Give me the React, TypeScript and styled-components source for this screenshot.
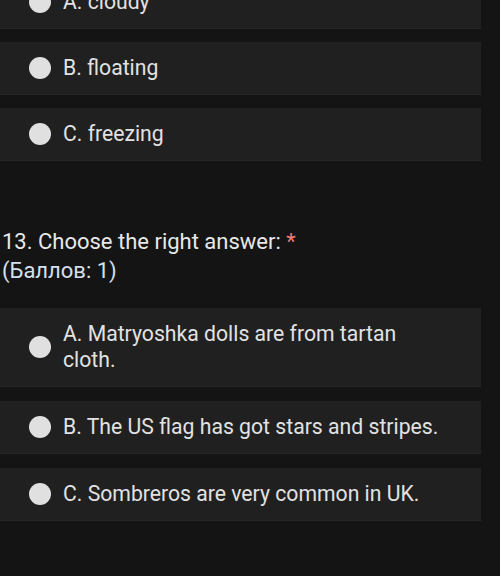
import styled, { createGlobalStyle } from "styled-components";

const Global = createGlobalStyle`
  html, body {
    margin: 0;
    padding: 0;
    background: #141414;
    overflow: hidden;
  }
  body {
    font-family: Roboto, "Noto Sans", Arial, sans-serif;
    -webkit-font-smoothing: antialiased;
  }
`;

const Page = styled.div`
  width: 500px;
  height: 576px;
  overflow: hidden;
  background: #141414;
  display: flex;
  flex-direction: column;
`;

const OptionList = styled.div<{ $gap: number; $shift?: number }>`
  display: flex;
  flex-direction: column;
  gap: ${(p) => p.$gap}px;
  width: 481px;
  margin-top: ${(p) => p.$shift ?? 0}px;
`;

const OptionCard = styled.div`
  display: flex;
  align-items: center;
  gap: 12px;
  padding: 13px 40px 14px 29px;
  background: #202020;
  box-shadow: inset 0 -1px 0 #262626;
`;

const Radio = styled.span`
  flex: none;
  width: 22px;
  height: 22px;
  border-radius: 50%;
  background: #e0e0e0;
`;

const OptionLabel = styled.div`
  color: #e2e2e2;
  font-size: 21.2px;
  line-height: 26px;
`;

const Question = styled.div`
  margin: 66px 0 23px;
  padding-left: 2px;
  font-size: 22px;
  line-height: 29px;
  color: #e8e8e8;
`;

const Required = styled.span`
  color: #ef7a7a;
`;

const Points = styled.div`
  color: #d4e0ec;
`;

const Option = ({ text }: { text: string }) => (
  <OptionCard>
    <Radio />
    <OptionLabel>{text}</OptionLabel>
  </OptionCard>
);

export default function App() {
  return (
    <Page>
      <Global />
      <OptionList $gap={13} $shift={-24}>
        <Option text="A. cloudy" />
        <Option text="B. floating" />
        <Option text="C. freezing" />
      </OptionList>
      <Question>
        <div>
          13. Choose the right answer: <Required>*</Required>
        </div>
        <Points>(Баллов: 1)</Points>
      </Question>
      <OptionList $gap={14}>
        <Option text="A. Matryoshka dolls are from tartan cloth." />
        <Option text="B. The US flag has got stars and stripes." />
        <Option text="C. Sombreros are very common in UK." />
      </OptionList>
    </Page>
  );
}
